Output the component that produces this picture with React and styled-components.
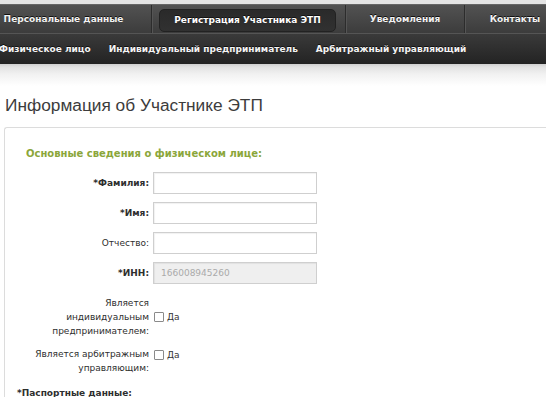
import styled, { createGlobalStyle } from "styled-components";

const GlobalStyle = createGlobalStyle`
  html, body {
    margin: 0;
    padding: 0;
    background: #ffffff;
    overflow: hidden;
  }
  body {
    font-family: "DejaVu Sans", "Liberation Sans", sans-serif;
    color: #333;
  }
`;

const mainTabs = [
  { label: "Персональные данные", width: 176 },
  { label: "Регистрация Участника ЭТП", width: 194, active: true },
  { label: "Уведомления", width: 119 },
  { label: "Контакты", width: 100 },
];

const subTabs = [
  "Физическое лицо",
  "Индивидуальный предприниматель",
  "Арбитражный управляющий",
];

const App = () => {
  return (
    <Page>
      <GlobalStyle />
      <TopStrip />
      <MainNav>
        {mainTabs.map((t, i) => (
          <MainItem key={t.label} $width={t.width} $last={i === mainTabs.length - 1}>
            {t.active ? <ActiveTab>{t.label}</ActiveTab> : t.label}
          </MainItem>
        ))}
      </MainNav>
      <SubNav>
        {subTabs.map((s) => (
          <SubItem key={s}>{s}</SubItem>
        ))}
      </SubNav>
      <Shade />

      <Title>Информация об Участнике ЭТП</Title>

      <Panel>
        <SectionTitle>Основные сведения о физическом лице:</SectionTitle>
        <Form>
          <Label $bold>*Фамилия:</Label>
          <Input />
          <Label $bold>*Имя:</Label>
          <Input />
          <Label>Отчество:</Label>
          <Input />
          <Label $bold>*ИНН:</Label>
          <Input $disabled>166008945260</Input>
          <Label $mt={4}>
            Является
            <br />
            индивидуальным
            <br />
            предпринимателем:
          </Label>
          <Check $mt={4} $align="center">
            <Box />
            <span>Да</span>
          </Check>
          <Label $mt={1}>
            Является арбитражным
            <br />
            управляющим:
          </Label>
          <Check $mt={4} $align="start">
            <Box />
            <span>Да</span>
          </Check>
        </Form>
        <Passport>*Паспортные данные:</Passport>
      </Panel>
    </Page>
  );
};

export default App;

const Page = styled.div`
  width: 546px;
  height: 397px;
  overflow: hidden;
`;

const TopStrip = styled.div`
  height: 4px;
  background: #e4e4e4;
`;

const MainNav = styled.div`
  display: flex;
  height: 29px;
  margin-left: -24px;
  background: linear-gradient(#525252, #3c3c3c);
  border-top: 1px solid #666;
  box-sizing: border-box;
`;

const MainItem = styled.div`
  flex: 0 0 ${(p) => p.$width}px;
  display: flex;
  align-items: center;
  justify-content: center;
  box-sizing: border-box;
  border-right: ${(p) => (p.$last ? "none" : "1px solid #2c2c2c")};
  box-shadow: ${(p) => (p.$last ? "none" : "1px 0 0 #555")};
  color: #f2f2f2;
  font-size: 9px;
  font-weight: bold;
  text-shadow: 0 -1px 0 #111;
  white-space: nowrap;
`;

const ActiveTab = styled.div`
  flex: 1;
  margin: 2px 9px 0 7px;
  height: 21px;
  display: flex;
  align-items: center;
  justify-content: center;
  background: linear-gradient(#2a2a2a, #313131);
  border: 1px solid #222;
  border-radius: 5px;
  color: #ffffff;
`;

const SubNav = styled.div`
  display: flex;
  gap: 18px;
  align-items: center;
  height: 31px;
  margin-left: -1px;
  background: linear-gradient(#3a3a3a, #232323);
  border-top: 1px solid #555;
  box-sizing: border-box;
`;

const SubItem = styled.div`
  color: #f4f4f4;
  font-size: 9px;
  font-weight: bold;
  white-space: nowrap;
  text-shadow: 0 -1px 0 #111;
`;

const Shade = styled.div`
  height: 22px;
  background: linear-gradient(#cfcfcf 0, #e2e2e2 3px, #f1f1f1 10px, #ffffff 22px);
`;

const Title = styled.h1`
  margin: 8px 0 0 5px;
  height: 33px;
  font-family: "Liberation Sans", Arial, sans-serif;
  font-size: 17.3px;
  font-weight: normal;
  color: #3c3c3c;
  line-height: 22px;
`;

const Panel = styled.div`
  margin-left: 4px;
  border: 1px solid #dcdcdc;
  border-right: none;
  border-bottom: none;
  border-top-left-radius: 3px;
  padding: 19px 0 0 0;
  height: 300px;
`;

const SectionTitle = styled.div`
  margin-left: 21px;
  color: #8ba63a;
  font-size: 10px;
  font-weight: bold;
  line-height: 14px;
`;

const Form = styled.div`
  display: grid;
  grid-template-columns: 144px 164px;
  column-gap: 4px;
  row-gap: 8px;
  margin-top: 11px;
  align-items: center;
`;

const Label = styled.div`
  margin-top: ${(p) => p.$mt || 0}px;
  text-align: right;
  font-size: 9px;
  line-height: 14px;
  font-weight: ${(p) => (p.$bold ? "bold" : "normal")};
  color: #2e2e2e;
`;

const Input = styled.div`
  height: 22px;
  box-sizing: border-box;
  border: 1px solid #cfcfcf;
  box-shadow: inset 1px 1px 1px rgba(0, 0, 0, 0.06);
  background: ${(p) => (p.$disabled ? "#efefef" : "#ffffff")};
  color: #aaaaaa;
  font-size: 9px;
  line-height: 20px;
  padding-left: 7px;
`;

const Check = styled.label`
  align-self: ${(p) => p.$align};
  margin-top: ${(p) => p.$mt || 0}px;
  display: flex;
  align-items: center;
  gap: 3px;
  padding-left: 1px;
  font-size: 9px;
  color: #333;
`;

const Box = styled.span`
  width: 10px;
  height: 10px;
  box-sizing: border-box;
  border: 1px solid #8a8a8a;
  border-radius: 1px;
  background: #fff;
`;

const Passport = styled.div`
  margin: 13px 0 0 12px;
  font-size: 9px;
  font-weight: bold;
  color: #2e2e2e;
`;
